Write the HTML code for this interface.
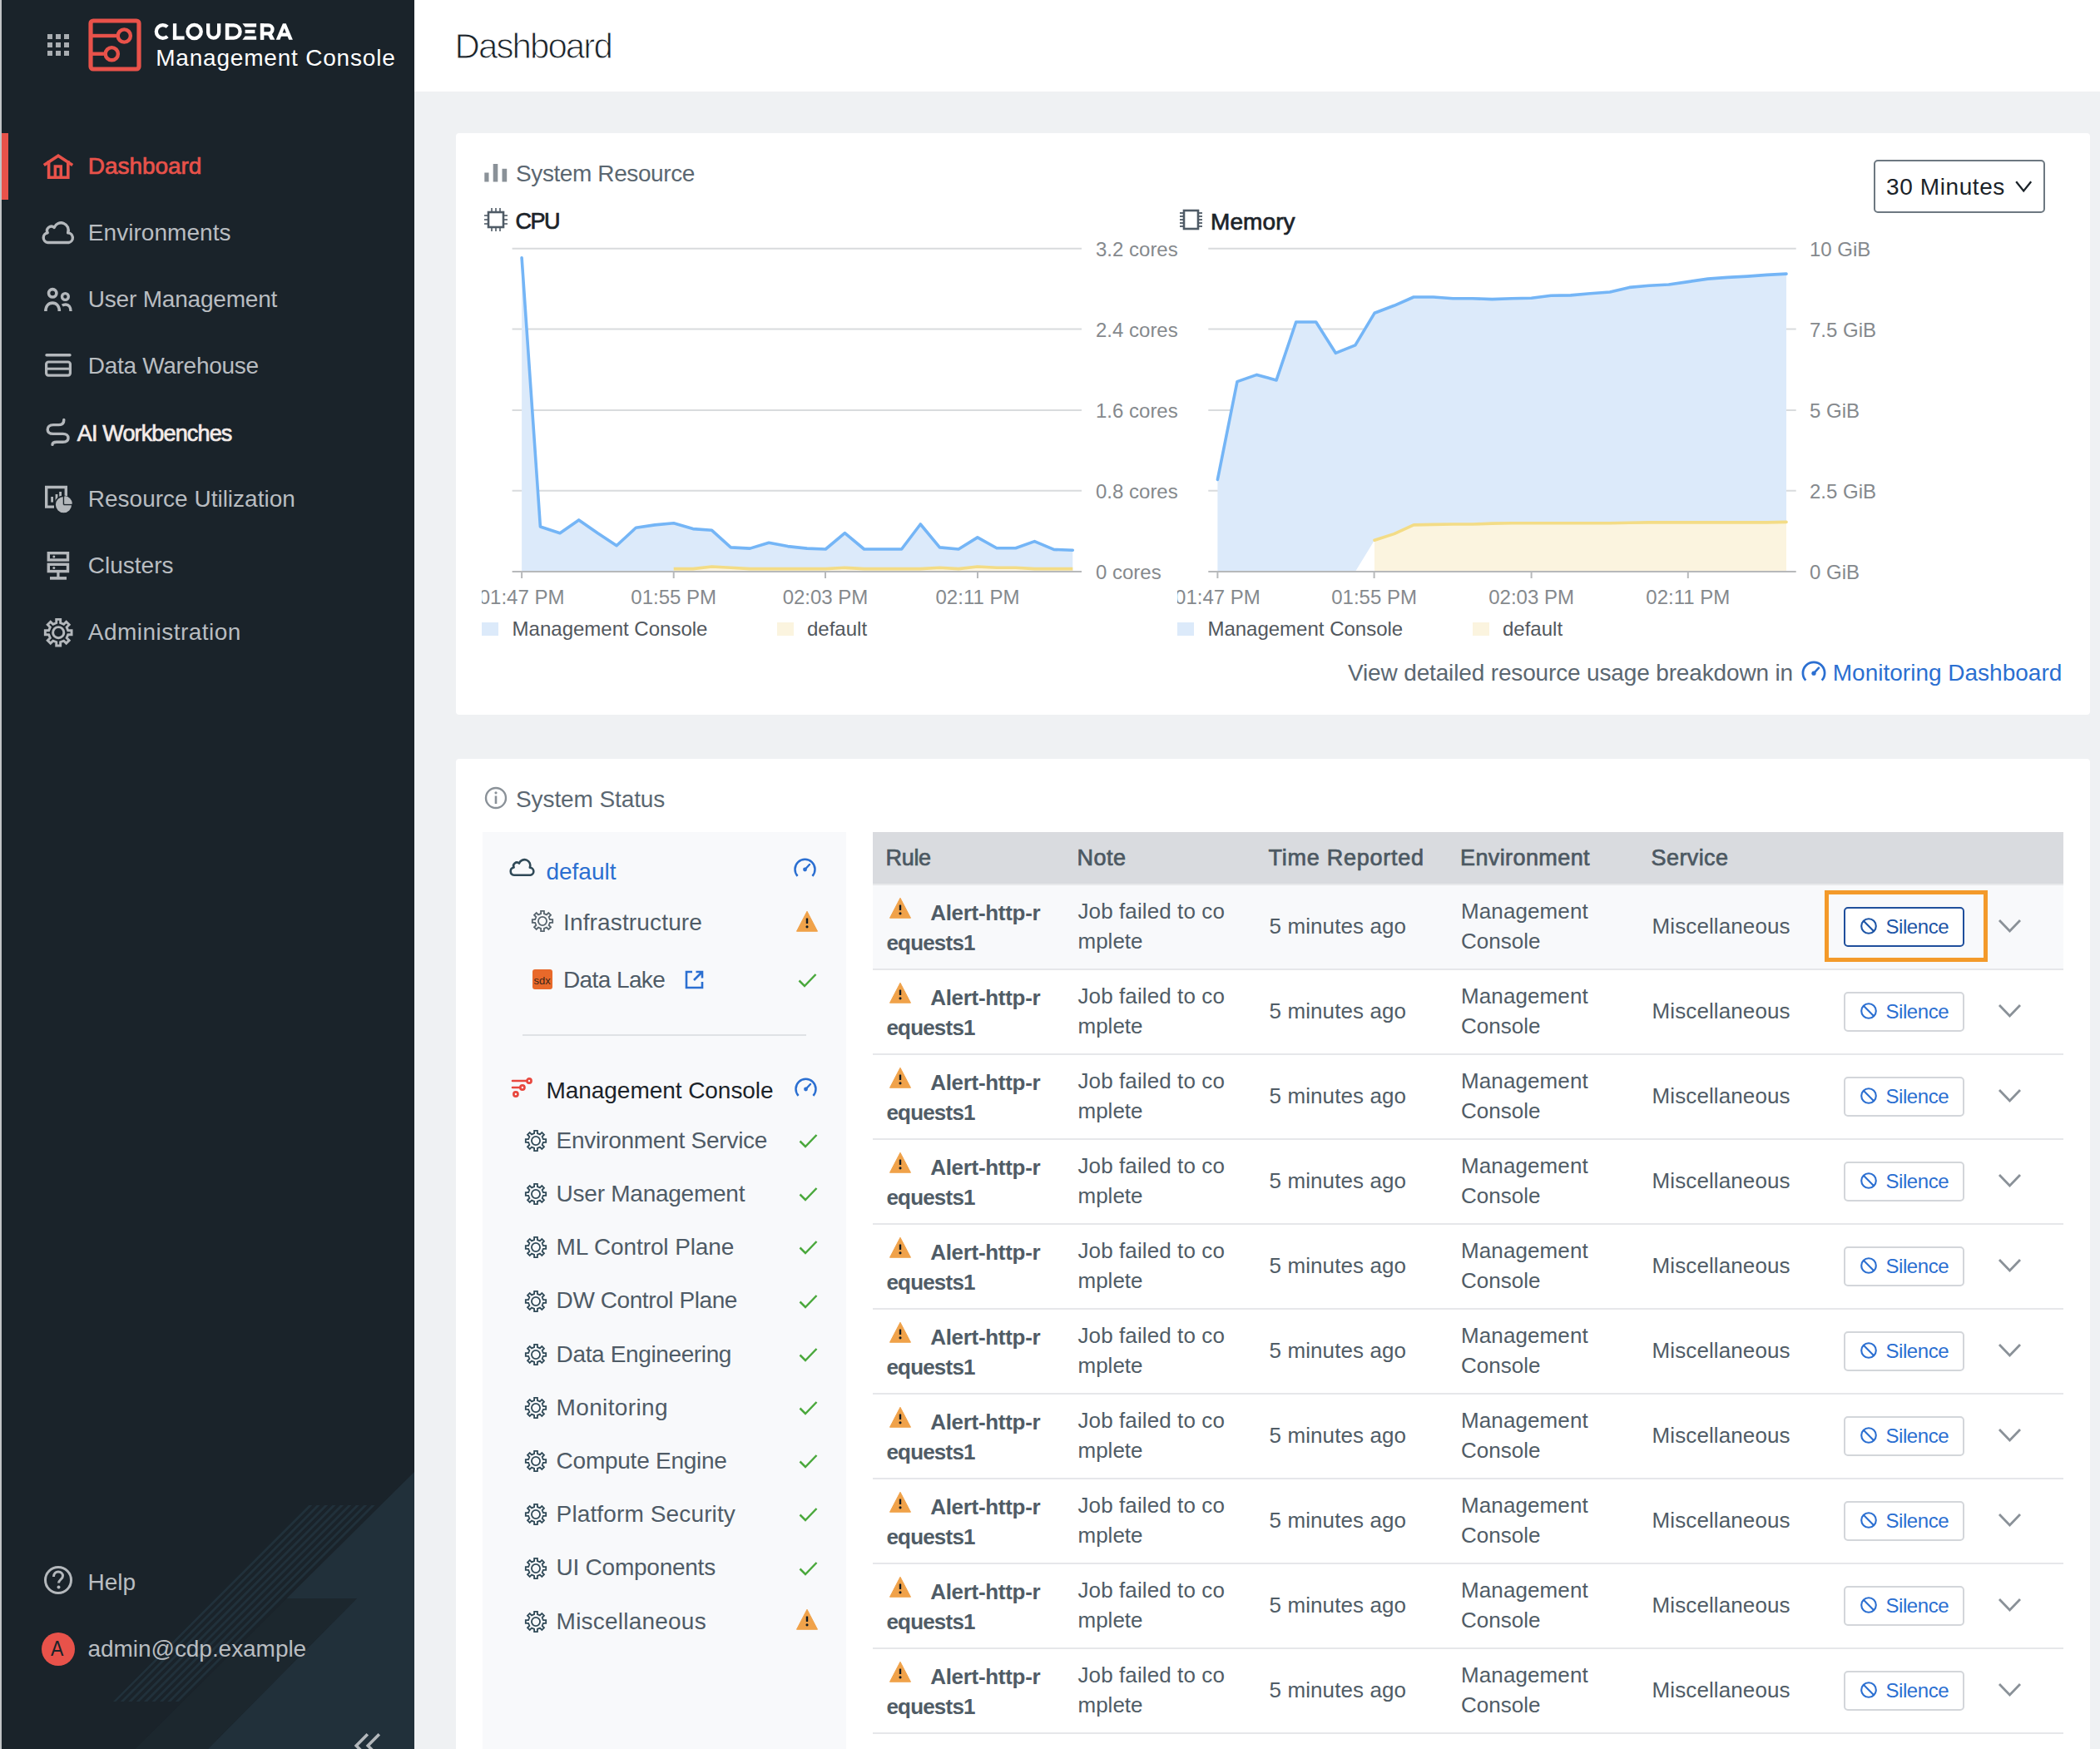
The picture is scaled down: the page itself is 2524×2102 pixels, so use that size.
<!DOCTYPE html>
<html><head><meta charset="utf-8"><style>
html,body{margin:0;padding:0;}
body{width:2524px;height:2102px;position:relative;overflow:hidden;background:#eff1f3;font-family:"Liberation Sans", sans-serif;}
.t{position:absolute;white-space:nowrap;}
svg{display:block;overflow:visible}
</style></head><body>
<div style="position:absolute;left:0;top:0;width:498px;height:2102px;background:#1a232a;overflow:hidden">
<svg width="498" height="2102" style="position:absolute;left:0;top:0">
<polygon points="344.5,1921 429,1921 250,2102 162.4,2102" fill="#1c272e"/>
<polygon points="498,1769 344.5,1921 429,1921 250,2102 498,2102" fill="#21303a"/>
<clipPath id="stc"><polygon points="370,1809 451,1809 219,2045 136,2045"/></clipPath>
<g clip-path="url(#stc)"><line x1="376.3" y1="1806" x2="131.3" y2="2051" stroke="#21313b" stroke-width="2.9"/><line x1="385.7" y1="1806" x2="140.7" y2="2051" stroke="#21313b" stroke-width="2.9"/><line x1="395.2" y1="1806" x2="150.2" y2="2051" stroke="#21313b" stroke-width="2.9"/><line x1="404.6" y1="1806" x2="159.6" y2="2051" stroke="#21313b" stroke-width="2.9"/><line x1="414.0" y1="1806" x2="169.0" y2="2051" stroke="#21313b" stroke-width="2.9"/><line x1="423.4" y1="1806" x2="178.4" y2="2051" stroke="#21313b" stroke-width="2.9"/><line x1="432.9" y1="1806" x2="187.9" y2="2051" stroke="#21313b" stroke-width="2.9"/><line x1="442.3" y1="1806" x2="197.3" y2="2051" stroke="#21313b" stroke-width="2.9"/><line x1="451.7" y1="1806" x2="206.7" y2="2051" stroke="#21313b" stroke-width="2.9"/></g>
</svg>
</div>
<div style="position:absolute;left:0.0px;top:0.0px;width:2.0px;height:2102.0px;background:#c2c4c6;"></div>
<div style="position:absolute;left:56.7px;top:40.7px;width:6.0px;height:6.0px;background:#a9adb1;"></div>
<div style="position:absolute;left:66.8px;top:40.7px;width:6.0px;height:6.0px;background:#a9adb1;"></div>
<div style="position:absolute;left:76.9px;top:40.7px;width:6.0px;height:6.0px;background:#a9adb1;"></div>
<div style="position:absolute;left:56.7px;top:50.8px;width:6.0px;height:6.0px;background:#a9adb1;"></div>
<div style="position:absolute;left:66.8px;top:50.8px;width:6.0px;height:6.0px;background:#a9adb1;"></div>
<div style="position:absolute;left:76.9px;top:50.8px;width:6.0px;height:6.0px;background:#a9adb1;"></div>
<div style="position:absolute;left:56.7px;top:60.9px;width:6.0px;height:6.0px;background:#a9adb1;"></div>
<div style="position:absolute;left:66.8px;top:60.9px;width:6.0px;height:6.0px;background:#a9adb1;"></div>
<div style="position:absolute;left:76.9px;top:60.9px;width:6.0px;height:6.0px;background:#a9adb1;"></div>
<svg style="position:absolute;left:104.0px;top:20.0px;" width="68.0" height="68.0" viewBox="0 0 68 68"><rect x="5" y="5" width="58" height="58" rx="3" fill="none" stroke="#e8524a" stroke-width="5.2"/>
<line x1="5" y1="23" x2="36" y2="23" stroke="#e8524a" stroke-width="4.4"/>
<circle cx="45.3" cy="23" r="7.6" fill="none" stroke="#e8524a" stroke-width="4.4"/>
<line x1="5" y1="44.7" x2="22" y2="44.7" stroke="#e8524a" stroke-width="4.4"/>
<circle cx="30.3" cy="44.7" r="7.6" fill="none" stroke="#e8524a" stroke-width="4.4"/></svg>
<svg style="position:absolute;left:0.0px;top:0.0px;" width="400.0" height="60.0" viewBox="0 0 400 60"><g fill="none" stroke="#fff" stroke-width="4.3">
<path d="M201.2 32.3 A7.9 7.9 0 1 0 201.2 43.7"/>
<circle cx="233.6" cy="37.95" r="8.15"/>
<path d="M250.15 28.2 V39.05 A6.5 6.5 0 0 0 263.15 39.05 V28.2"/>
<path d="M273.05 30.35 H281 A7.6 7.6 0 0 1 281 45.55 H273.05 Z"/>
<path d="M315.05 47.7 V30.35 H322.5 A5 5 0 0 1 322.5 40.35 H316"/>
</g>
<g fill="#fff">
<rect x="207.9" y="28.2" width="4.3" height="19.5"/><rect x="207.9" y="43.4" width="13.7" height="4.3"/>
<rect x="270.9" y="28.2" width="4.3" height="19.5"/>
<rect x="312.9" y="28.2" width="4.3" height="19.5"/>
<polygon points="291.4,28.2 308.1,28.2 308.1,32.5 294.6,32.5"/>
<polygon points="294.6,35.8 306.4,35.8 306.4,40.1 294.6,40.1"/>
<polygon points="294.6,43.4 308.1,43.4 308.1,47.7 291.4,47.7"/>
<polygon points="320.5,39 325.8,39 330.4,47.7 324.9,47.7"/>
<path fill-rule="evenodd" d="M331.7 47.7 L339.9 28.2 L343.7 28.2 L351.9 47.7 L347.2 47.7 L345.6 43.7 L338 43.7 L336.4 47.7 Z M339.6 39.6 L344 39.6 L341.8 34 Z"/>
</g></svg>
<div class="t" style="left:187.2px;top:55.7px;font-size:28px;line-height:28px;color:#ffffff;font-weight:400;letter-spacing:0.8px;">Management Console</div>
<div style="position:absolute;left:2.0px;top:160.0px;width:8.0px;height:80.0px;background:#e8524a;"></div>
<div class="t" style="left:105.8px;top:185.8px;font-size:28px;line-height:28px;color:#e8524a;font-weight:400;letter-spacing:-0.05px;-webkit-text-stroke:0.7px currentColor;">Dashboard</div>
<div class="t" style="left:105.8px;top:265.8px;font-size:28px;line-height:28px;color:#b9bdc1;font-weight:400;letter-spacing:0.05px;">Environments</div>
<div class="t" style="left:105.8px;top:345.8px;font-size:28px;line-height:28px;color:#b9bdc1;font-weight:400;letter-spacing:-0.2px;">User Management</div>
<div class="t" style="left:105.8px;top:425.8px;font-size:28px;line-height:28px;color:#b9bdc1;font-weight:400;letter-spacing:-0.3px;">Data Warehouse</div>
<div class="t" style="left:92.8px;top:507.6px;font-size:27px;line-height:27px;color:#f3ebe9;font-weight:400;letter-spacing:-0.85px;-webkit-text-stroke:0.7px currentColor;">AI Workbenches</div>
<div class="t" style="left:105.8px;top:585.8px;font-size:28px;line-height:28px;color:#b9bdc1;font-weight:400;letter-spacing:0.0px;">Resource Utilization</div>
<div class="t" style="left:105.8px;top:665.8px;font-size:28px;line-height:28px;color:#b9bdc1;font-weight:400;letter-spacing:0.0px;">Clusters</div>
<div class="t" style="left:105.8px;top:745.8px;font-size:28px;line-height:28px;color:#b9bdc1;font-weight:400;letter-spacing:0.47px;">Administration</div>
<svg style="position:absolute;left:0.0px;top:170.0px;" width="100.0" height="60.0" viewBox="0 170 100 60"><path d="M52.8 198.5 L70 187.2 L87.2 198.5" fill="none" stroke="#e8524a" stroke-width="3.6"/><path d="M58.6 193 V213.2 H81.8 V193" fill="none" stroke="#e8524a" stroke-width="3.6"/><path d="M66.35 213.2 V199.95 H73.25 V213.2" fill="none" stroke="#e8524a" stroke-width="3.5"/></svg>
<svg style="position:absolute;left:0.0px;top:255.0px;" width="100.0" height="50.0" viewBox="0 255 100 50"><path d="M57.5 291.5 A5.9 5.9 0 0 1 57.2 279.8 A5.2 5.2 0 0 1 65.2 273.4 A8.3 8.3 0 0 1 81.6 279.9 A5.85 5.85 0 0 1 82.6 291.5 Z" fill="none" stroke="#b4b8bc" stroke-width="3.4" stroke-linejoin="round"/></svg>
<svg style="position:absolute;left:0.0px;top:335.0px;" width="100.0" height="50.0" viewBox="0 335 100 50"><circle cx="63.2" cy="352.3" r="4.7" fill="none" stroke="#b4b8bc" stroke-width="3.6"/><path d="M54.9 374 C54.9 367.5 58.5 364.1 63.1 364.1 C67.7 364.1 71.3 367.5 71.3 374" fill="none" stroke="#b4b8bc" stroke-width="3.6"/><circle cx="78.4" cy="356.5" r="3.9" fill="none" stroke="#b4b8bc" stroke-width="3.4"/><path d="M74.8 367.2 C76 366.3 77.5 366 79 366 C82.5 366 85 368.8 85 374" fill="none" stroke="#b4b8bc" stroke-width="3.4"/></svg>
<svg style="position:absolute;left:0.0px;top:415.0px;" width="100.0" height="45.0" viewBox="0 415 100 45"><line x1="56" y1="426.8" x2="84" y2="426.8" stroke="#b4b8bc" stroke-width="3.4" stroke-linecap="round"/><rect x="55.6" y="435" width="28.8" height="16.1" rx="2.6" fill="none" stroke="#b4b8bc" stroke-width="3.2"/><line x1="55.6" y1="443.2" x2="84.4" y2="443.2" stroke="#b4b8bc" stroke-width="3"/></svg>
<svg style="position:absolute;left:0.0px;top:495.0px;" width="100.0" height="50.0" viewBox="0 495 100 50"><path d="M76.8 504.4 C76.8 508.6 74.5 510.6 70.5 510.6 L64 510.6 C59.5 510.6 57.2 513 57.2 516.2 C57.2 519.4 59.5 521.4 64 521.4 L75.5 521.4 C79.8 521.4 82 523.6 82 526.4 C82 529.2 79.8 531.2 75.5 531.2 L68 531.2 C64.5 531.2 63 532.6 63 534.4" fill="none" stroke="#b4b8bc" stroke-width="3.4" stroke-linecap="round" stroke-linejoin="round"/></svg>
<svg style="position:absolute;left:0.0px;top:575.0px;" width="100.0" height="50.0" viewBox="0 575 100 50"><path d="M65 609.1 H55.7 V585.5 H79.3 V597" fill="none" stroke="#b4b8bc" stroke-width="3.4"/><rect x="61.2" y="597" width="2.8" height="6.6" fill="#b4b8bc"/><rect x="66.6" y="594" width="2.8" height="9.6" fill="#b4b8bc"/><rect x="71.2" y="591" width="2.8" height="8" fill="#b4b8bc"/><circle cx="76.5" cy="606.6" r="10.4" fill="#b4b8bc" stroke="#1a232a" stroke-width="1.6"/><path d="M76.5 606.6 V596.5 M76.5 606.6 H86.5" stroke="#1a232a" stroke-width="1.5"/><path d="M77.5 596 A10 10 0 0 1 87 605.6 H77.5 Z" fill="#b4b8bc"/></svg>
<svg style="position:absolute;left:0.0px;top:655.0px;" width="100.0" height="50.0" viewBox="0 655 100 50"><rect x="58.3" y="664.7" width="23.2" height="8.3" fill="none" stroke="#b4b8bc" stroke-width="3.4"/><rect x="58.3" y="678.3" width="23.2" height="8.3" fill="none" stroke="#b4b8bc" stroke-width="3.4"/><circle cx="64.8" cy="669" r="1.5" fill="#b4b8bc"/><circle cx="64.8" cy="682.6" r="1.5" fill="#b4b8bc"/><line x1="69.9" y1="688" x2="69.9" y2="694" stroke="#b4b8bc" stroke-width="3.2"/><line x1="60" y1="694.9" x2="80" y2="694.9" stroke="#b4b8bc" stroke-width="3.6"/></svg>
<svg style="position:absolute;left:51.8px;top:741.8px;" width="36.4" height="36.4" viewBox="0 0 28 28"><path d="M12.10,5.10 L12.10,1.80 L15.90,1.80 L15.90,5.10 L18.95,6.36 L21.28,4.03 L23.97,6.72 L21.64,9.05 L22.90,12.10 L26.20,12.10 L26.20,15.90 L22.90,15.90 L21.64,18.95 L23.97,21.28 L21.28,23.97 L18.95,21.64 L15.90,22.90 L15.90,26.20 L12.10,26.20 L12.10,22.90 L9.05,21.64 L6.72,23.97 L4.03,21.28 L6.36,18.95 L5.10,15.90 L1.80,15.90 L1.80,12.10 L5.10,12.10 L6.36,9.05 L4.03,6.72 L6.72,4.03 L9.05,6.36Z" fill="none" stroke="#b4b8bc" stroke-width="2.25" stroke-linejoin="miter"/><circle cx="14" cy="14" r="5.05" fill="none" stroke="#b4b8bc" stroke-width="2.25"/></svg>
<svg style="position:absolute;left:51.0px;top:1880.0px;" width="38.0" height="38.0" viewBox="0 0 38 38"><circle cx="19" cy="19" r="15.5" fill="none" stroke="#b4b8bc" stroke-width="3"/><path d="M13.5 15 C13.5 11 16 9 19 9 C22.5 9 24.5 11.5 24.5 14 C24.5 18 19.5 18.5 19.5 22.5" fill="none" stroke="#b4b8bc" stroke-width="3"/><circle cx="19.5" cy="27.5" r="2" fill="#b4b8bc"/></svg>
<div class="t" style="left:105.5px;top:1887.8px;font-size:28px;line-height:28px;color:#b9bdc1;font-weight:400;letter-spacing:0px;">Help</div>
<div style="position:absolute;left:50px;top:1962px;width:40px;height:40px;border-radius:50%;background:#e8524a"></div>
<div class="t" style="left:61.3px;top:1968.8px;font-size:25px;line-height:25px;color:#1b2329;font-weight:400;letter-spacing:0px;transform:scaleX(0.92);transform-origin:left">A</div>
<div class="t" style="left:105.5px;top:1967.8px;font-size:28px;line-height:28px;color:#b9bdc1;font-weight:400;letter-spacing:-0.05px;">admin@cdp.example</div>
<svg style="position:absolute;left:400.0px;top:2060.0px;overflow:hidden" width="98.0" height="42.0" viewBox="400 2060 98 42"><path d="M441.8 2084.2 L428.2 2098 L441.8 2111.8 M455.8 2084.2 L442.2 2098 L455.8 2111.8" fill="none" stroke="#b4b8bc" stroke-width="3.6"/></svg>
<div style="position:absolute;left:498.0px;top:0.0px;width:2026.0px;height:110.0px;background:#ffffff;"></div>
<div class="t" style="left:546.5px;top:34.9px;font-size:42px;line-height:42px;color:#1b2329;font-weight:400;letter-spacing:-1.9px;-webkit-text-stroke:1px #fff;">Dashboard</div>
<div style="position:absolute;left:548.0px;top:160.0px;width:1964.0px;height:699.0px;background:#ffffff;border-radius:4px;"></div>
<svg style="position:absolute;left:582.0px;top:196.0px;" width="28.0" height="23.0" viewBox="0 0 28 23"><rect x="0.3" y="11.5" width="5.2" height="11" fill="#8a9198"/><rect x="10.7" y="1" width="5.6" height="21.5" fill="#8a9198"/><rect x="21.5" y="6.8" width="5.7" height="15.7" fill="#8a9198"/></svg>
<div class="t" style="left:620.0px;top:194.8px;font-size:28px;line-height:28px;color:#5b6771;font-weight:400;letter-spacing:-0.4px;">System Resource</div>
<svg style="position:absolute;left:582.0px;top:250.0px;" width="28.0" height="28.0" viewBox="0 0 28 28"><rect x="5" y="5" width="18" height="18" fill="none" stroke="#4f5b66" stroke-width="2.6"/><line x1="9" y1="0" x2="9" y2="5" stroke="#4f5b66" stroke-width="1.6"/><line x1="9" y1="23" x2="9" y2="28" stroke="#4f5b66" stroke-width="1.6"/><line x1="0" y1="9" x2="5" y2="9" stroke="#4f5b66" stroke-width="1.6"/><line x1="23" y1="9" x2="28" y2="9" stroke="#4f5b66" stroke-width="1.6"/><line x1="14" y1="0" x2="14" y2="5" stroke="#4f5b66" stroke-width="1.6"/><line x1="14" y1="23" x2="14" y2="28" stroke="#4f5b66" stroke-width="1.6"/><line x1="0" y1="14" x2="5" y2="14" stroke="#4f5b66" stroke-width="1.6"/><line x1="23" y1="14" x2="28" y2="14" stroke="#4f5b66" stroke-width="1.6"/><line x1="19" y1="0" x2="19" y2="5" stroke="#4f5b66" stroke-width="1.6"/><line x1="19" y1="23" x2="19" y2="28" stroke="#4f5b66" stroke-width="1.6"/><line x1="0" y1="19" x2="5" y2="19" stroke="#4f5b66" stroke-width="1.6"/><line x1="23" y1="19" x2="28" y2="19" stroke="#4f5b66" stroke-width="1.6"/></svg>
<div class="t" style="left:619.5px;top:252.6px;font-size:27px;line-height:27px;color:#1b2329;font-weight:400;letter-spacing:-1.5px;-webkit-text-stroke:0.7px currentColor;">CPU</div>
<svg style="position:absolute;left:1418.0px;top:250.0px;" width="28.0" height="28.0" viewBox="0 0 28 28"><rect x="5" y="3" width="17" height="22" fill="none" stroke="#4f5b66" stroke-width="2.6"/><line x1="0" y1="6" x2="5" y2="6" stroke="#4f5b66" stroke-width="1.8"/><line x1="22" y1="6" x2="27" y2="6" stroke="#4f5b66" stroke-width="1.8"/><line x1="0" y1="10" x2="5" y2="10" stroke="#4f5b66" stroke-width="1.8"/><line x1="22" y1="10" x2="27" y2="10" stroke="#4f5b66" stroke-width="1.8"/><line x1="0" y1="14" x2="5" y2="14" stroke="#4f5b66" stroke-width="1.8"/><line x1="22" y1="14" x2="27" y2="14" stroke="#4f5b66" stroke-width="1.8"/><line x1="0" y1="18" x2="5" y2="18" stroke="#4f5b66" stroke-width="1.8"/><line x1="22" y1="18" x2="27" y2="18" stroke="#4f5b66" stroke-width="1.8"/><line x1="0" y1="22" x2="5" y2="22" stroke="#4f5b66" stroke-width="1.8"/><line x1="22" y1="22" x2="27" y2="22" stroke="#4f5b66" stroke-width="1.8"/></svg>
<div class="t" style="left:1455.0px;top:253.2px;font-size:28px;line-height:28px;color:#1b2329;font-weight:400;letter-spacing:0.1px;-webkit-text-stroke:0.7px currentColor;">Memory</div>
<div style="position:absolute;left:2251.6px;top:192.4px;width:202.2px;height:59.2px;border:2px solid #6d7881;border-radius:5px"></div>
<div class="t" style="left:2267.0px;top:211.3px;font-size:28px;line-height:28px;color:#1b2329;font-weight:400;letter-spacing:0.6px;">30 Minutes</div>
<svg style="position:absolute;left:2400.0px;top:200.0px;" width="60.0" height="40.0" viewBox="2400 200 60 40"><path d="M2423.2 218.2 L2432.2 229.4 L2441.2 218.2" fill="none" stroke="#1b2329" stroke-width="2.3"/></svg>
<svg style="position:absolute;left:0;top:0" width="2524" height="900"><line x1="615.6" y1="298.7" x2="1300" y2="298.7" stroke="#d9dbdd" stroke-width="2"/><line x1="1452.3" y1="298.7" x2="2158.7" y2="298.7" stroke="#d9dbdd" stroke-width="2"/><line x1="615.6" y1="395.6" x2="1300" y2="395.6" stroke="#d9dbdd" stroke-width="2"/><line x1="1452.3" y1="395.6" x2="2158.7" y2="395.6" stroke="#d9dbdd" stroke-width="2"/><line x1="615.6" y1="492.9" x2="1300" y2="492.9" stroke="#d9dbdd" stroke-width="2"/><line x1="1452.3" y1="492.9" x2="2158.7" y2="492.9" stroke="#d9dbdd" stroke-width="2"/><line x1="615.6" y1="589.8" x2="1300" y2="589.8" stroke="#d9dbdd" stroke-width="2"/><line x1="1452.3" y1="589.8" x2="2158.7" y2="589.8" stroke="#d9dbdd" stroke-width="2"/><polygon points="627.1,309.9 649.4,633.0 673.0,640.7 695.7,624.9 718.4,640.7 741.1,655.7 764.3,634.3 787.0,630.9 809.7,628.7 832.9,635.6 855.6,637.3 878.3,657.9 901.4,659.1 924.1,652.3 946.9,656.6 970.0,659.1 992.3,660.0 1015.4,640.7 1038.6,660.0 1060.9,660.0 1083.6,660.0 1106.3,630.0 1129.4,657.9 1152.1,660.0 1174.9,645.9 1198.0,658.7 1220.7,658.7 1243.4,650.6 1266.6,660.4 1289.3,661.3 1289.3,687 627.1,687" fill="#dceafa"/><polygon points="809.7,683.6 832.9,683.6 855.6,681.0 878.3,682.3 901.4,683.6 924.1,683.6 946.9,683.6 970.0,683.6 992.3,683.6 1015.4,682.3 1038.6,683.6 1060.9,683.6 1083.6,683.6 1106.3,683.6 1129.4,682.3 1152.1,683.6 1174.9,681.0 1198.0,682.3 1220.7,682.3 1243.4,683.6 1266.6,683.6 1289.3,683.6 1289.3,687 809.7,687" fill="#fbf4df"/><polyline points="809.7,683.6 832.9,683.6 855.6,681.0 878.3,682.3 901.4,683.6 924.1,683.6 946.9,683.6 970.0,683.6 992.3,683.6 1015.4,682.3 1038.6,683.6 1060.9,683.6 1083.6,683.6 1106.3,683.6 1129.4,682.3 1152.1,683.6 1174.9,681.0 1198.0,682.3 1220.7,682.3 1243.4,683.6 1266.6,683.6 1289.3,683.6" fill="none" stroke="#f3dc86" stroke-width="3.6" stroke-linejoin="round"/><polyline points="627.1,309.9 649.4,633.0 673.0,640.7 695.7,624.9 718.4,640.7 741.1,655.7 764.3,634.3 787.0,630.9 809.7,628.7 832.9,635.6 855.6,637.3 878.3,657.9 901.4,659.1 924.1,652.3 946.9,656.6 970.0,659.1 992.3,660.0 1015.4,640.7 1038.6,660.0 1060.9,660.0 1083.6,660.0 1106.3,630.0 1129.4,657.9 1152.1,660.0 1174.9,645.9 1198.0,658.7 1220.7,658.7 1243.4,650.6 1266.6,660.4 1289.3,661.3" fill="none" stroke="#74b5f6" stroke-width="3.6" stroke-linejoin="round" stroke-linecap="round"/><polygon points="1463.4,576.4 1487.0,458.6 1510.6,450.4 1534.1,456.9 1557.7,387.0 1581.7,387.0 1605.3,424.3 1628.9,414.9 1652.0,376.3 1675.6,367.3 1699.1,357.0 1722.7,357.0 1746.3,358.7 1769.9,358.7 1793.4,359.6 1817.0,358.7 1840.6,358.3 1864.1,355.3 1887.7,354.9 1911.3,352.7 1934.9,351.0 1958.4,345.4 1982.0,343.3 2005.6,342.0 2029.1,338.6 2052.7,335.1 2076.3,333.4 2099.9,332.1 2123.4,330.4 2147.0,329.1 2147.0,687 2147.0,627.4 2147.0,627.4 2123.4,627.9 2099.9,627.9 2076.3,627.9 2052.7,627.9 2029.1,627.9 2005.6,627.9 1982.0,627.9 1958.4,628.3 1934.9,628.7 1911.3,628.7 1887.7,628.7 1864.1,628.7 1840.6,628.7 1817.0,628.7 1793.4,629.1 1769.9,630.0 1746.3,630.0 1722.7,630.4 1699.1,630.9 1675.6,641.6 1652.0,649.3 1628.9,687 1463.4,687" fill="#dceafa"/><polygon points="1652.0,649.3 1675.6,641.6 1699.1,630.9 1722.7,630.4 1746.3,630.0 1769.9,630.0 1793.4,629.1 1817.0,628.7 1840.6,628.7 1864.1,628.7 1887.7,628.7 1911.3,628.7 1934.9,628.7 1958.4,628.3 1982.0,627.9 2005.6,627.9 2029.1,627.9 2052.7,627.9 2076.3,627.9 2099.9,627.9 2123.4,627.9 2147.0,627.4 2147.0,687 1652.0,687" fill="#fbf4df"/><polyline points="1652.0,649.3 1675.6,641.6 1699.1,630.9 1722.7,630.4 1746.3,630.0 1769.9,630.0 1793.4,629.1 1817.0,628.7 1840.6,628.7 1864.1,628.7 1887.7,628.7 1911.3,628.7 1934.9,628.7 1958.4,628.3 1982.0,627.9 2005.6,627.9 2029.1,627.9 2052.7,627.9 2076.3,627.9 2099.9,627.9 2123.4,627.9 2147.0,627.4" fill="none" stroke="#f3dc86" stroke-width="3.6" stroke-linejoin="round" stroke-linecap="round"/><polyline points="1463.4,576.4 1487.0,458.6 1510.6,450.4 1534.1,456.9 1557.7,387.0 1581.7,387.0 1605.3,424.3 1628.9,414.9 1652.0,376.3 1675.6,367.3 1699.1,357.0 1722.7,357.0 1746.3,358.7 1769.9,358.7 1793.4,359.6 1817.0,358.7 1840.6,358.3 1864.1,355.3 1887.7,354.9 1911.3,352.7 1934.9,351.0 1958.4,345.4 1982.0,343.3 2005.6,342.0 2029.1,338.6 2052.7,335.1 2076.3,333.4 2099.9,332.1 2123.4,330.4 2147.0,329.1" fill="none" stroke="#74b5f6" stroke-width="3.6" stroke-linejoin="round" stroke-linecap="round"/><line x1="615.6" y1="687" x2="1300" y2="687" stroke="#b7b9bb" stroke-width="2"/><line x1="1452.3" y1="687" x2="2158.7" y2="687" stroke="#b7b9bb" stroke-width="2"/><line x1="627.1" y1="687" x2="627.1" y2="695" stroke="#b7b9bb" stroke-width="2"/><line x1="809.7" y1="687" x2="809.7" y2="695" stroke="#b7b9bb" stroke-width="2"/><line x1="992" y1="687" x2="992" y2="695" stroke="#b7b9bb" stroke-width="2"/><line x1="1175" y1="687" x2="1175" y2="695" stroke="#b7b9bb" stroke-width="2"/><line x1="1463.4" y1="687" x2="1463.4" y2="695" stroke="#b7b9bb" stroke-width="2"/><line x1="1651.6" y1="687" x2="1651.6" y2="695" stroke="#b7b9bb" stroke-width="2"/><line x1="1840.6" y1="687" x2="1840.6" y2="695" stroke="#b7b9bb" stroke-width="2"/><line x1="2028.8" y1="687" x2="2028.8" y2="695" stroke="#b7b9bb" stroke-width="2"/></svg>
<div class="t" style="left:1317.0px;top:287.5px;font-size:24px;line-height:24px;color:#85898d;font-weight:400;letter-spacing:0px;">3.2 cores</div>
<div class="t" style="left:1317.0px;top:384.6px;font-size:24px;line-height:24px;color:#85898d;font-weight:400;letter-spacing:0px;">2.4 cores</div>
<div class="t" style="left:1317.0px;top:481.7px;font-size:24px;line-height:24px;color:#85898d;font-weight:400;letter-spacing:0px;">1.6 cores</div>
<div class="t" style="left:1317.0px;top:578.8px;font-size:24px;line-height:24px;color:#85898d;font-weight:400;letter-spacing:0px;">0.8 cores</div>
<div class="t" style="left:1317.0px;top:675.9px;font-size:24px;line-height:24px;color:#85898d;font-weight:400;letter-spacing:0px;">0 cores</div>
<div class="t" style="left:2175.0px;top:287.5px;font-size:24px;line-height:24px;color:#85898d;font-weight:400;letter-spacing:0px;">10 GiB</div>
<div class="t" style="left:2175.0px;top:384.6px;font-size:24px;line-height:24px;color:#85898d;font-weight:400;letter-spacing:0px;">7.5 GiB</div>
<div class="t" style="left:2175.0px;top:481.7px;font-size:24px;line-height:24px;color:#85898d;font-weight:400;letter-spacing:0px;">5 GiB</div>
<div class="t" style="left:2175.0px;top:578.8px;font-size:24px;line-height:24px;color:#85898d;font-weight:400;letter-spacing:0px;">2.5 GiB</div>
<div class="t" style="left:2175.0px;top:675.9px;font-size:24px;line-height:24px;color:#85898d;font-weight:400;letter-spacing:0px;">0 GiB</div>
<div style="position:absolute;left:579px;top:690px;width:725px;height:50px;overflow:hidden"><div class="t" style="left:-51.9px;top:15.7px;width:200px;text-align:center;font-size:24px;line-height:24px;color:#85898d">01:47 PM</div><div class="t" style="left:130.7px;top:15.7px;width:200px;text-align:center;font-size:24px;line-height:24px;color:#85898d">01:55 PM</div><div class="t" style="left:313.0px;top:15.7px;width:200px;text-align:center;font-size:24px;line-height:24px;color:#85898d">02:03 PM</div><div class="t" style="left:496.0px;top:15.7px;width:200px;text-align:center;font-size:24px;line-height:24px;color:#85898d">02:11 PM</div></div>
<div style="position:absolute;left:1415px;top:690px;width:725px;height:50px;overflow:hidden"><div class="t" style="left:-51.6px;top:15.7px;width:200px;text-align:center;font-size:24px;line-height:24px;color:#85898d">01:47 PM</div><div class="t" style="left:136.6px;top:15.7px;width:200px;text-align:center;font-size:24px;line-height:24px;color:#85898d">01:55 PM</div><div class="t" style="left:325.6px;top:15.7px;width:200px;text-align:center;font-size:24px;line-height:24px;color:#85898d">02:03 PM</div><div class="t" style="left:513.8px;top:15.7px;width:200px;text-align:center;font-size:24px;line-height:24px;color:#85898d">02:11 PM</div></div>
<div style="position:absolute;left:579.0px;top:748.0px;width:19.5px;height:15.5px;background:#dceafa;"></div>
<div class="t" style="left:615.6px;top:744.0px;font-size:24px;line-height:24px;color:#52575d;font-weight:400;letter-spacing:0px;">Management Console</div>
<div style="position:absolute;left:933.6px;top:748.0px;width:20.0px;height:15.5px;background:#fbf4df;"></div>
<div class="t" style="left:970.0px;top:744.0px;font-size:24px;line-height:24px;color:#52575d;font-weight:400;letter-spacing:0px;">default</div>
<div style="position:absolute;left:1415.0px;top:748.0px;width:19.5px;height:15.5px;background:#dceafa;"></div>
<div class="t" style="left:1451.4px;top:744.0px;font-size:24px;line-height:24px;color:#52575d;font-weight:400;letter-spacing:0px;">Management Console</div>
<div style="position:absolute;left:1769.5px;top:748.0px;width:20.0px;height:15.5px;background:#fbf4df;"></div>
<div class="t" style="left:1806.0px;top:744.0px;font-size:24px;line-height:24px;color:#52575d;font-weight:400;letter-spacing:0px;">default</div>
<div class="t" style="left:1620.0px;top:794.8px;font-size:28px;line-height:28px;color:#5b6771;font-weight:400;letter-spacing:-0.15px;">View detailed resource usage breakdown in</div>
<svg style="position:absolute;left:2165.0px;top:795.0px;" width="30.0" height="24.0" viewBox="0 0 27 22"><path d="M4.6 20.8 A12 12 0 1 1 22.4 20.8" fill="none" stroke="#2b6fd1" stroke-width="2.5" stroke-linecap="butt"/><path d="M13.5 13 L19 7" stroke="#2b6fd1" stroke-width="2.4" stroke-linecap="round"/><circle cx="13.5" cy="13" r="2.4" fill="#2b6fd1"/></svg>
<div class="t" style="left:2202.8px;top:794.8px;font-size:28px;line-height:28px;color:#2b6fd1;font-weight:400;letter-spacing:0px;">Monitoring Dashboard</div>
<div style="position:absolute;left:548.0px;top:912.0px;width:1964.0px;height:1300.0px;background:#ffffff;border-radius:4px;"></div>
<svg style="position:absolute;left:582.0px;top:945.0px;" width="28.0" height="28.0" viewBox="0 0 28 28"><circle cx="14" cy="14" r="12" fill="none" stroke="#8a9198" stroke-width="2.4"/><rect x="12.7" y="11.5" width="2.6" height="9.5" fill="#8a9198"/><circle cx="14" cy="7.8" r="1.6" fill="#8a9198"/></svg>
<div class="t" style="left:620.0px;top:947.4px;font-size:28px;line-height:28px;color:#5b6771;font-weight:400;letter-spacing:-0.1px;">System Status</div>
<div style="position:absolute;left:580.0px;top:1000.0px;width:437.0px;height:1200.0px;background:#f8f9fb;"></div>
<svg style="position:absolute;left:612.3px;top:1032.3px;" width="31.4" height="21.1" viewBox="50 266.4 40 26.8"><path d="M57.5 291.5 A5.9 5.9 0 0 1 57.2 279.8 A5.2 5.2 0 0 1 65.2 273.4 A8.3 8.3 0 0 1 81.6 279.9 A5.85 5.85 0 0 1 82.6 291.5 Z" fill="none" stroke="#2f4957" stroke-width="3.3" stroke-linejoin="round"/></svg>
<div class="t" style="left:656.4px;top:1034.1px;font-size:28px;line-height:28px;color:#2b6fd1;font-weight:400;letter-spacing:0px;">default</div>
<svg style="position:absolute;left:954.0px;top:1032.0px;" width="27.0" height="22.0" viewBox="0 0 27 22"><path d="M4.6 20.8 A12 12 0 1 1 22.4 20.8" fill="none" stroke="#2b6fd1" stroke-width="2.5" stroke-linecap="butt"/><path d="M13.5 13 L19 7" stroke="#2b6fd1" stroke-width="2.4" stroke-linecap="round"/><circle cx="13.5" cy="13" r="2.4" fill="#2b6fd1"/></svg>
<svg style="position:absolute;left:637.8px;top:1092.9px;" width="28.0" height="28.0" viewBox="0 0 28 28"><path d="M12.10,5.10 L12.10,1.80 L15.90,1.80 L15.90,5.10 L18.95,6.36 L21.28,4.03 L23.97,6.72 L21.64,9.05 L22.90,12.10 L26.20,12.10 L26.20,15.90 L22.90,15.90 L21.64,18.95 L23.97,21.28 L21.28,23.97 L18.95,21.64 L15.90,22.90 L15.90,26.20 L12.10,26.20 L12.10,22.90 L9.05,21.64 L6.72,23.97 L4.03,21.28 L6.36,18.95 L5.10,15.90 L1.80,15.90 L1.80,12.10 L5.10,12.10 L6.36,9.05 L4.03,6.72 L6.72,4.03 L9.05,6.36Z" fill="none" stroke="#56636d" stroke-width="1.8" stroke-linejoin="miter"/><circle cx="14" cy="14" r="5.05" fill="none" stroke="#56636d" stroke-width="1.8"/></svg>
<div class="t" style="left:677.0px;top:1094.8px;font-size:28px;line-height:28px;color:#4f5b66;font-weight:400;letter-spacing:0.15px;">Infrastructure</div>
<svg style="position:absolute;left:957.0px;top:1094.0px;" width="26.0" height="26.5" viewBox="0 0 26 26"><path d="M13 1 L25.5 25 L0.5 25 Z" fill="#f0a24a" stroke="#f0a24a" stroke-width="1" stroke-linejoin="round"/><rect x="11.8" y="9.2" width="2.4" height="6.6" rx="0.6" fill="#111a22"/><circle cx="13" cy="19.6" r="1.55" fill="#111a22"/></svg>
<div style="position:absolute;left:640px;top:1165px;width:24px;height:24px;border-radius:3px;background:#e8692a"></div>
<div class="t" style="left:641.5px;top:1171.5px;font-size:13px;line-height:13px;color:#3b2418;font-weight:400;letter-spacing:0px;">sdx</div>
<div class="t" style="left:677.0px;top:1164.1px;font-size:28px;line-height:28px;color:#4f5b66;font-weight:400;letter-spacing:-0.6px;">Data Lake</div>
<svg style="position:absolute;left:823.0px;top:1166.0px;" width="23.0" height="23.0" viewBox="0 0 23 23"><path d="M9 2 H2 V21 H21 V14" fill="none" stroke="#2b6fd1" stroke-width="2.6"/><path d="M11 12 L20.5 2.5 M13.5 2 H21 V9.5" fill="none" stroke="#2b6fd1" stroke-width="2.6"/></svg>
<svg style="position:absolute;left:959.0px;top:1168.5px;" width="23.0" height="18.0" viewBox="0 0 23 18"><path d="M1.5 9.5 L8 16 L21.5 2" fill="none" stroke="#4aa83c" stroke-width="2.5"/></svg>
<div style="position:absolute;left:628.0px;top:1243.0px;width:341.0px;height:2.0px;background:#dfe2e5;"></div>
<svg style="position:absolute;left:614.0px;top:1294.0px;" width="27.0" height="27.0" viewBox="0 0 27 27"><line x1="2" y1="5" x2="20" y2="5" stroke="#e8483f" stroke-width="2.6" stroke-linecap="round"/><circle cx="22" cy="5" r="2.55" fill="#f8f9fb" stroke="#e8483f" stroke-width="2.7"/><line x1="2" y1="13" x2="12" y2="13" stroke="#e8483f" stroke-width="2.6" stroke-linecap="round"/><circle cx="13.9" cy="13" r="2.55" fill="#f8f9fb" stroke="#e8483f" stroke-width="2.7"/><circle cx="5.9" cy="21" r="2.55" fill="none" stroke="#e8483f" stroke-width="2.7"/></svg>
<div class="t" style="left:656.5px;top:1296.8px;font-size:28px;line-height:28px;color:#1b2329;font-weight:400;letter-spacing:-0.05px;">Management Console</div>
<svg style="position:absolute;left:954.5px;top:1296.0px;" width="27.0" height="22.0" viewBox="0 0 27 22"><path d="M4.6 20.8 A12 12 0 1 1 22.4 20.8" fill="none" stroke="#2b6fd1" stroke-width="2.5" stroke-linecap="butt"/><path d="M13.5 13 L19 7" stroke="#2b6fd1" stroke-width="2.4" stroke-linecap="round"/><circle cx="13.5" cy="13" r="2.4" fill="#2b6fd1"/></svg>
<svg style="position:absolute;left:630.0px;top:1356.9px;" width="28.0" height="28.0" viewBox="0 0 28 28"><path d="M12.10,5.10 L12.10,1.80 L15.90,1.80 L15.90,5.10 L18.95,6.36 L21.28,4.03 L23.97,6.72 L21.64,9.05 L22.90,12.10 L26.20,12.10 L26.20,15.90 L22.90,15.90 L21.64,18.95 L23.97,21.28 L21.28,23.97 L18.95,21.64 L15.90,22.90 L15.90,26.20 L12.10,26.20 L12.10,22.90 L9.05,21.64 L6.72,23.97 L4.03,21.28 L6.36,18.95 L5.10,15.90 L1.80,15.90 L1.80,12.10 L5.10,12.10 L6.36,9.05 L4.03,6.72 L6.72,4.03 L9.05,6.36Z" fill="none" stroke="#2f4957" stroke-width="1.8" stroke-linejoin="miter"/><circle cx="14" cy="14" r="5.05" fill="none" stroke="#2f4957" stroke-width="1.8"/></svg>
<div class="t" style="left:668.6px;top:1356.8px;font-size:28px;line-height:28px;color:#4f5b66;font-weight:400;letter-spacing:-0.25px;">Environment Service</div>
<svg style="position:absolute;left:959.5px;top:1362.0px;" width="23.0" height="18.0" viewBox="0 0 23 18"><path d="M1.5 9.5 L8 16 L21.5 2" fill="none" stroke="#4aa83c" stroke-width="2.5"/></svg>
<svg style="position:absolute;left:630.0px;top:1421.1px;" width="28.0" height="28.0" viewBox="0 0 28 28"><path d="M12.10,5.10 L12.10,1.80 L15.90,1.80 L15.90,5.10 L18.95,6.36 L21.28,4.03 L23.97,6.72 L21.64,9.05 L22.90,12.10 L26.20,12.10 L26.20,15.90 L22.90,15.90 L21.64,18.95 L23.97,21.28 L21.28,23.97 L18.95,21.64 L15.90,22.90 L15.90,26.20 L12.10,26.20 L12.10,22.90 L9.05,21.64 L6.72,23.97 L4.03,21.28 L6.36,18.95 L5.10,15.90 L1.80,15.90 L1.80,12.10 L5.10,12.10 L6.36,9.05 L4.03,6.72 L6.72,4.03 L9.05,6.36Z" fill="none" stroke="#2f4957" stroke-width="1.8" stroke-linejoin="miter"/><circle cx="14" cy="14" r="5.05" fill="none" stroke="#2f4957" stroke-width="1.8"/></svg>
<div class="t" style="left:668.6px;top:1421.0px;font-size:28px;line-height:28px;color:#4f5b66;font-weight:400;letter-spacing:-0.25px;">User Management</div>
<svg style="position:absolute;left:959.5px;top:1426.2px;" width="23.0" height="18.0" viewBox="0 0 23 18"><path d="M1.5 9.5 L8 16 L21.5 2" fill="none" stroke="#4aa83c" stroke-width="2.5"/></svg>
<svg style="position:absolute;left:630.0px;top:1485.3px;" width="28.0" height="28.0" viewBox="0 0 28 28"><path d="M12.10,5.10 L12.10,1.80 L15.90,1.80 L15.90,5.10 L18.95,6.36 L21.28,4.03 L23.97,6.72 L21.64,9.05 L22.90,12.10 L26.20,12.10 L26.20,15.90 L22.90,15.90 L21.64,18.95 L23.97,21.28 L21.28,23.97 L18.95,21.64 L15.90,22.90 L15.90,26.20 L12.10,26.20 L12.10,22.90 L9.05,21.64 L6.72,23.97 L4.03,21.28 L6.36,18.95 L5.10,15.90 L1.80,15.90 L1.80,12.10 L5.10,12.10 L6.36,9.05 L4.03,6.72 L6.72,4.03 L9.05,6.36Z" fill="none" stroke="#2f4957" stroke-width="1.8" stroke-linejoin="miter"/><circle cx="14" cy="14" r="5.05" fill="none" stroke="#2f4957" stroke-width="1.8"/></svg>
<div class="t" style="left:668.6px;top:1485.2px;font-size:28px;line-height:28px;color:#4f5b66;font-weight:400;letter-spacing:-0.1px;">ML Control Plane</div>
<svg style="position:absolute;left:959.5px;top:1490.4px;" width="23.0" height="18.0" viewBox="0 0 23 18"><path d="M1.5 9.5 L8 16 L21.5 2" fill="none" stroke="#4aa83c" stroke-width="2.5"/></svg>
<svg style="position:absolute;left:630.0px;top:1549.5px;" width="28.0" height="28.0" viewBox="0 0 28 28"><path d="M12.10,5.10 L12.10,1.80 L15.90,1.80 L15.90,5.10 L18.95,6.36 L21.28,4.03 L23.97,6.72 L21.64,9.05 L22.90,12.10 L26.20,12.10 L26.20,15.90 L22.90,15.90 L21.64,18.95 L23.97,21.28 L21.28,23.97 L18.95,21.64 L15.90,22.90 L15.90,26.20 L12.10,26.20 L12.10,22.90 L9.05,21.64 L6.72,23.97 L4.03,21.28 L6.36,18.95 L5.10,15.90 L1.80,15.90 L1.80,12.10 L5.10,12.10 L6.36,9.05 L4.03,6.72 L6.72,4.03 L9.05,6.36Z" fill="none" stroke="#2f4957" stroke-width="1.8" stroke-linejoin="miter"/><circle cx="14" cy="14" r="5.05" fill="none" stroke="#2f4957" stroke-width="1.8"/></svg>
<div class="t" style="left:668.6px;top:1549.4px;font-size:28px;line-height:28px;color:#4f5b66;font-weight:400;letter-spacing:-0.42000000000000004px;">DW Control Plane</div>
<svg style="position:absolute;left:959.5px;top:1554.6px;" width="23.0" height="18.0" viewBox="0 0 23 18"><path d="M1.5 9.5 L8 16 L21.5 2" fill="none" stroke="#4aa83c" stroke-width="2.5"/></svg>
<svg style="position:absolute;left:630.0px;top:1613.7px;" width="28.0" height="28.0" viewBox="0 0 28 28"><path d="M12.10,5.10 L12.10,1.80 L15.90,1.80 L15.90,5.10 L18.95,6.36 L21.28,4.03 L23.97,6.72 L21.64,9.05 L22.90,12.10 L26.20,12.10 L26.20,15.90 L22.90,15.90 L21.64,18.95 L23.97,21.28 L21.28,23.97 L18.95,21.64 L15.90,22.90 L15.90,26.20 L12.10,26.20 L12.10,22.90 L9.05,21.64 L6.72,23.97 L4.03,21.28 L6.36,18.95 L5.10,15.90 L1.80,15.90 L1.80,12.10 L5.10,12.10 L6.36,9.05 L4.03,6.72 L6.72,4.03 L9.05,6.36Z" fill="none" stroke="#2f4957" stroke-width="1.8" stroke-linejoin="miter"/><circle cx="14" cy="14" r="5.05" fill="none" stroke="#2f4957" stroke-width="1.8"/></svg>
<div class="t" style="left:668.6px;top:1613.6px;font-size:28px;line-height:28px;color:#4f5b66;font-weight:400;letter-spacing:-0.37px;">Data Engineering</div>
<svg style="position:absolute;left:959.5px;top:1618.8px;" width="23.0" height="18.0" viewBox="0 0 23 18"><path d="M1.5 9.5 L8 16 L21.5 2" fill="none" stroke="#4aa83c" stroke-width="2.5"/></svg>
<svg style="position:absolute;left:630.0px;top:1677.9px;" width="28.0" height="28.0" viewBox="0 0 28 28"><path d="M12.10,5.10 L12.10,1.80 L15.90,1.80 L15.90,5.10 L18.95,6.36 L21.28,4.03 L23.97,6.72 L21.64,9.05 L22.90,12.10 L26.20,12.10 L26.20,15.90 L22.90,15.90 L21.64,18.95 L23.97,21.28 L21.28,23.97 L18.95,21.64 L15.90,22.90 L15.90,26.20 L12.10,26.20 L12.10,22.90 L9.05,21.64 L6.72,23.97 L4.03,21.28 L6.36,18.95 L5.10,15.90 L1.80,15.90 L1.80,12.10 L5.10,12.10 L6.36,9.05 L4.03,6.72 L6.72,4.03 L9.05,6.36Z" fill="none" stroke="#2f4957" stroke-width="1.8" stroke-linejoin="miter"/><circle cx="14" cy="14" r="5.05" fill="none" stroke="#2f4957" stroke-width="1.8"/></svg>
<div class="t" style="left:668.6px;top:1677.8px;font-size:28px;line-height:28px;color:#4f5b66;font-weight:400;letter-spacing:0.35px;">Monitoring</div>
<svg style="position:absolute;left:959.5px;top:1683.0px;" width="23.0" height="18.0" viewBox="0 0 23 18"><path d="M1.5 9.5 L8 16 L21.5 2" fill="none" stroke="#4aa83c" stroke-width="2.5"/></svg>
<svg style="position:absolute;left:630.0px;top:1742.1px;" width="28.0" height="28.0" viewBox="0 0 28 28"><path d="M12.10,5.10 L12.10,1.80 L15.90,1.80 L15.90,5.10 L18.95,6.36 L21.28,4.03 L23.97,6.72 L21.64,9.05 L22.90,12.10 L26.20,12.10 L26.20,15.90 L22.90,15.90 L21.64,18.95 L23.97,21.28 L21.28,23.97 L18.95,21.64 L15.90,22.90 L15.90,26.20 L12.10,26.20 L12.10,22.90 L9.05,21.64 L6.72,23.97 L4.03,21.28 L6.36,18.95 L5.10,15.90 L1.80,15.90 L1.80,12.10 L5.10,12.10 L6.36,9.05 L4.03,6.72 L6.72,4.03 L9.05,6.36Z" fill="none" stroke="#2f4957" stroke-width="1.8" stroke-linejoin="miter"/><circle cx="14" cy="14" r="5.05" fill="none" stroke="#2f4957" stroke-width="1.8"/></svg>
<div class="t" style="left:668.6px;top:1742.0px;font-size:28px;line-height:28px;color:#4f5b66;font-weight:400;letter-spacing:-0.25px;">Compute Engine</div>
<svg style="position:absolute;left:959.5px;top:1747.2px;" width="23.0" height="18.0" viewBox="0 0 23 18"><path d="M1.5 9.5 L8 16 L21.5 2" fill="none" stroke="#4aa83c" stroke-width="2.5"/></svg>
<svg style="position:absolute;left:630.0px;top:1806.3px;" width="28.0" height="28.0" viewBox="0 0 28 28"><path d="M12.10,5.10 L12.10,1.80 L15.90,1.80 L15.90,5.10 L18.95,6.36 L21.28,4.03 L23.97,6.72 L21.64,9.05 L22.90,12.10 L26.20,12.10 L26.20,15.90 L22.90,15.90 L21.64,18.95 L23.97,21.28 L21.28,23.97 L18.95,21.64 L15.90,22.90 L15.90,26.20 L12.10,26.20 L12.10,22.90 L9.05,21.64 L6.72,23.97 L4.03,21.28 L6.36,18.95 L5.10,15.90 L1.80,15.90 L1.80,12.10 L5.10,12.10 L6.36,9.05 L4.03,6.72 L6.72,4.03 L9.05,6.36Z" fill="none" stroke="#2f4957" stroke-width="1.8" stroke-linejoin="miter"/><circle cx="14" cy="14" r="5.05" fill="none" stroke="#2f4957" stroke-width="1.8"/></svg>
<div class="t" style="left:668.6px;top:1806.2px;font-size:28px;line-height:28px;color:#4f5b66;font-weight:400;letter-spacing:0.13px;">Platform Security</div>
<svg style="position:absolute;left:959.5px;top:1811.4px;" width="23.0" height="18.0" viewBox="0 0 23 18"><path d="M1.5 9.5 L8 16 L21.5 2" fill="none" stroke="#4aa83c" stroke-width="2.5"/></svg>
<svg style="position:absolute;left:630.0px;top:1870.5px;" width="28.0" height="28.0" viewBox="0 0 28 28"><path d="M12.10,5.10 L12.10,1.80 L15.90,1.80 L15.90,5.10 L18.95,6.36 L21.28,4.03 L23.97,6.72 L21.64,9.05 L22.90,12.10 L26.20,12.10 L26.20,15.90 L22.90,15.90 L21.64,18.95 L23.97,21.28 L21.28,23.97 L18.95,21.64 L15.90,22.90 L15.90,26.20 L12.10,26.20 L12.10,22.90 L9.05,21.64 L6.72,23.97 L4.03,21.28 L6.36,18.95 L5.10,15.90 L1.80,15.90 L1.80,12.10 L5.10,12.10 L6.36,9.05 L4.03,6.72 L6.72,4.03 L9.05,6.36Z" fill="none" stroke="#2f4957" stroke-width="1.8" stroke-linejoin="miter"/><circle cx="14" cy="14" r="5.05" fill="none" stroke="#2f4957" stroke-width="1.8"/></svg>
<div class="t" style="left:668.6px;top:1870.4px;font-size:28px;line-height:28px;color:#4f5b66;font-weight:400;letter-spacing:-0.25px;">UI Components</div>
<svg style="position:absolute;left:959.5px;top:1875.6px;" width="23.0" height="18.0" viewBox="0 0 23 18"><path d="M1.5 9.5 L8 16 L21.5 2" fill="none" stroke="#4aa83c" stroke-width="2.5"/></svg>
<svg style="position:absolute;left:630.0px;top:1934.7px;" width="28.0" height="28.0" viewBox="0 0 28 28"><path d="M12.10,5.10 L12.10,1.80 L15.90,1.80 L15.90,5.10 L18.95,6.36 L21.28,4.03 L23.97,6.72 L21.64,9.05 L22.90,12.10 L26.20,12.10 L26.20,15.90 L22.90,15.90 L21.64,18.95 L23.97,21.28 L21.28,23.97 L18.95,21.64 L15.90,22.90 L15.90,26.20 L12.10,26.20 L12.10,22.90 L9.05,21.64 L6.72,23.97 L4.03,21.28 L6.36,18.95 L5.10,15.90 L1.80,15.90 L1.80,12.10 L5.10,12.10 L6.36,9.05 L4.03,6.72 L6.72,4.03 L9.05,6.36Z" fill="none" stroke="#2f4957" stroke-width="1.8" stroke-linejoin="miter"/><circle cx="14" cy="14" r="5.05" fill="none" stroke="#2f4957" stroke-width="1.8"/></svg>
<div class="t" style="left:668.6px;top:1934.6px;font-size:28px;line-height:28px;color:#4f5b66;font-weight:400;letter-spacing:0.21999999999999997px;">Miscellaneous</div>
<svg style="position:absolute;left:956.5px;top:1932.8px;" width="26.0" height="26.5" viewBox="0 0 26 26"><path d="M13 1 L25.5 25 L0.5 25 Z" fill="#f0a24a" stroke="#f0a24a" stroke-width="1" stroke-linejoin="round"/><rect x="11.8" y="9.2" width="2.4" height="6.6" rx="0.6" fill="#111a22"/><circle cx="13" cy="19.6" r="1.55" fill="#111a22"/></svg>
<div style="position:absolute;left:1049.0px;top:1000.0px;width:1431.0px;height:62.0px;background:#d9dbdf;"></div>
<div class="t" style="left:1064.5px;top:1018.0px;font-size:27px;line-height:27px;color:#4c5862;font-weight:400;letter-spacing:-0.3px;-webkit-text-stroke:0.7px currentColor;">Rule</div>
<div class="t" style="left:1294.5px;top:1018.0px;font-size:27px;line-height:27px;color:#4c5862;font-weight:400;letter-spacing:0.5px;-webkit-text-stroke:0.7px currentColor;">Note</div>
<div class="t" style="left:1524.5px;top:1018.0px;font-size:27px;line-height:27px;color:#4c5862;font-weight:400;letter-spacing:0.75px;-webkit-text-stroke:0.7px currentColor;">Time Reported</div>
<div class="t" style="left:1755.0px;top:1018.0px;font-size:27px;line-height:27px;color:#4c5862;font-weight:400;letter-spacing:0.4px;-webkit-text-stroke:0.7px currentColor;">Environment</div>
<div class="t" style="left:1984.6px;top:1018.0px;font-size:27px;line-height:27px;color:#4c5862;font-weight:400;letter-spacing:0.4px;-webkit-text-stroke:0.7px currentColor;">Service</div>
<div style="position:absolute;left:1049.0px;top:1062.0px;width:1431.0px;height:2.0px;background:#e8e9eb;"></div>
<div style="position:absolute;left:1049.0px;top:1064.0px;width:1431.0px;height:100.0px;background:#f8f9fb;"></div>
<div style="position:absolute;left:1049.0px;top:1164.0px;width:1431.0px;height:2.0px;background:#e6e7ea;"></div>
<svg style="position:absolute;left:1069.0px;top:1078.0px;" width="26.0" height="26.5" viewBox="0 0 26 26"><path d="M13 1 L25.5 25 L0.5 25 Z" fill="#f0a24a" stroke="#f0a24a" stroke-width="1" stroke-linejoin="round"/><rect x="11.8" y="9.2" width="2.4" height="6.6" rx="0.6" fill="#111a22"/><circle cx="13" cy="19.6" r="1.55" fill="#111a22"/></svg>
<div class="t" style="left:1118.2px;top:1084.1px;font-size:26px;line-height:26px;color:#505c66;font-weight:700;letter-spacing:-0.3px;">Alert-http-r</div>
<div class="t" style="left:1065.4px;top:1120.0px;font-size:26px;line-height:26px;color:#505c66;font-weight:700;letter-spacing:-0.8px;">equests1</div>
<div class="t" style="left:1295.5px;top:1082.3px;font-size:26px;line-height:26px;color:#505c66;font-weight:400;letter-spacing:0.1px;">Job failed to co</div>
<div class="t" style="left:1295.5px;top:1118.2px;font-size:26px;line-height:26px;color:#505c66;font-weight:400;letter-spacing:0px;">mplete</div>
<div class="t" style="left:1525.5px;top:1099.9px;font-size:26px;line-height:26px;color:#505c66;font-weight:400;letter-spacing:0.1px;">5 minutes ago</div>
<div class="t" style="left:1756.0px;top:1082.4px;font-size:26px;line-height:26px;color:#505c66;font-weight:400;letter-spacing:0.1px;">Management</div>
<div class="t" style="left:1756.0px;top:1117.8px;font-size:26px;line-height:26px;color:#505c66;font-weight:400;letter-spacing:0px;">Console</div>
<div class="t" style="left:1985.6px;top:1099.9px;font-size:26px;line-height:26px;color:#505c66;font-weight:400;letter-spacing:0.1px;">Miscellaneous</div>
<div style="position:absolute;left:2216px;top:1090px;width:140.5px;height:43.5px;border:2px solid #1f4f9c;border-radius:5px;background:#fff"></div>
<svg style="position:absolute;left:2234.5px;top:1102.0px;" width="22.0" height="22.0" viewBox="0 0 22 22"><circle cx="11" cy="11" r="8.8" fill="none" stroke="#1d55a6" stroke-width="2.1"/><line x1="4.8" y1="4.8" x2="17.2" y2="17.2" stroke="#1d55a6" stroke-width="2.1"/></svg>
<div class="t" style="left:2266.4px;top:1101.6px;font-size:24px;line-height:24px;color:#1d55a6;font-weight:400;letter-spacing:-0.4px;">Silence</div>
<svg style="position:absolute;left:2401.0px;top:1103.0px;" width="29.0" height="19.0" viewBox="0 0 29 19"><path d="M2 3 L14.5 16 L27 3" fill="none" stroke="#8a9198" stroke-width="2.8"/></svg>
<div style="position:absolute;left:1049.0px;top:1266.0px;width:1431.0px;height:2.0px;background:#e6e7ea;"></div>
<svg style="position:absolute;left:1069.0px;top:1180.0px;" width="26.0" height="26.5" viewBox="0 0 26 26"><path d="M13 1 L25.5 25 L0.5 25 Z" fill="#f0a24a" stroke="#f0a24a" stroke-width="1" stroke-linejoin="round"/><rect x="11.8" y="9.2" width="2.4" height="6.6" rx="0.6" fill="#111a22"/><circle cx="13" cy="19.6" r="1.55" fill="#111a22"/></svg>
<div class="t" style="left:1118.2px;top:1186.1px;font-size:26px;line-height:26px;color:#505c66;font-weight:700;letter-spacing:-0.3px;">Alert-http-r</div>
<div class="t" style="left:1065.4px;top:1222.0px;font-size:26px;line-height:26px;color:#505c66;font-weight:700;letter-spacing:-0.8px;">equests1</div>
<div class="t" style="left:1295.5px;top:1184.3px;font-size:26px;line-height:26px;color:#505c66;font-weight:400;letter-spacing:0.1px;">Job failed to co</div>
<div class="t" style="left:1295.5px;top:1220.2px;font-size:26px;line-height:26px;color:#505c66;font-weight:400;letter-spacing:0px;">mplete</div>
<div class="t" style="left:1525.5px;top:1201.9px;font-size:26px;line-height:26px;color:#505c66;font-weight:400;letter-spacing:0.1px;">5 minutes ago</div>
<div class="t" style="left:1756.0px;top:1184.4px;font-size:26px;line-height:26px;color:#505c66;font-weight:400;letter-spacing:0.1px;">Management</div>
<div class="t" style="left:1756.0px;top:1219.8px;font-size:26px;line-height:26px;color:#505c66;font-weight:400;letter-spacing:0px;">Console</div>
<div class="t" style="left:1985.6px;top:1201.9px;font-size:26px;line-height:26px;color:#505c66;font-weight:400;letter-spacing:0.1px;">Miscellaneous</div>
<div style="position:absolute;left:2216px;top:1192px;width:140.5px;height:43.5px;border:2px solid #d3d6da;border-radius:5px;background:#fff"></div>
<svg style="position:absolute;left:2234.5px;top:1204.0px;" width="22.0" height="22.0" viewBox="0 0 22 22"><circle cx="11" cy="11" r="8.8" fill="none" stroke="#2b6fd1" stroke-width="2.1"/><line x1="4.8" y1="4.8" x2="17.2" y2="17.2" stroke="#2b6fd1" stroke-width="2.1"/></svg>
<div class="t" style="left:2266.4px;top:1203.6px;font-size:24px;line-height:24px;color:#2b6fd1;font-weight:400;letter-spacing:-0.4px;">Silence</div>
<svg style="position:absolute;left:2401.0px;top:1205.0px;" width="29.0" height="19.0" viewBox="0 0 29 19"><path d="M2 3 L14.5 16 L27 3" fill="none" stroke="#8a9198" stroke-width="2.8"/></svg>
<div style="position:absolute;left:1049.0px;top:1368.0px;width:1431.0px;height:2.0px;background:#e6e7ea;"></div>
<svg style="position:absolute;left:1069.0px;top:1282.0px;" width="26.0" height="26.5" viewBox="0 0 26 26"><path d="M13 1 L25.5 25 L0.5 25 Z" fill="#f0a24a" stroke="#f0a24a" stroke-width="1" stroke-linejoin="round"/><rect x="11.8" y="9.2" width="2.4" height="6.6" rx="0.6" fill="#111a22"/><circle cx="13" cy="19.6" r="1.55" fill="#111a22"/></svg>
<div class="t" style="left:1118.2px;top:1288.1px;font-size:26px;line-height:26px;color:#505c66;font-weight:700;letter-spacing:-0.3px;">Alert-http-r</div>
<div class="t" style="left:1065.4px;top:1324.0px;font-size:26px;line-height:26px;color:#505c66;font-weight:700;letter-spacing:-0.8px;">equests1</div>
<div class="t" style="left:1295.5px;top:1286.3px;font-size:26px;line-height:26px;color:#505c66;font-weight:400;letter-spacing:0.1px;">Job failed to co</div>
<div class="t" style="left:1295.5px;top:1322.2px;font-size:26px;line-height:26px;color:#505c66;font-weight:400;letter-spacing:0px;">mplete</div>
<div class="t" style="left:1525.5px;top:1303.9px;font-size:26px;line-height:26px;color:#505c66;font-weight:400;letter-spacing:0.1px;">5 minutes ago</div>
<div class="t" style="left:1756.0px;top:1286.4px;font-size:26px;line-height:26px;color:#505c66;font-weight:400;letter-spacing:0.1px;">Management</div>
<div class="t" style="left:1756.0px;top:1321.8px;font-size:26px;line-height:26px;color:#505c66;font-weight:400;letter-spacing:0px;">Console</div>
<div class="t" style="left:1985.6px;top:1303.9px;font-size:26px;line-height:26px;color:#505c66;font-weight:400;letter-spacing:0.1px;">Miscellaneous</div>
<div style="position:absolute;left:2216px;top:1294px;width:140.5px;height:43.5px;border:2px solid #d3d6da;border-radius:5px;background:#fff"></div>
<svg style="position:absolute;left:2234.5px;top:1306.0px;" width="22.0" height="22.0" viewBox="0 0 22 22"><circle cx="11" cy="11" r="8.8" fill="none" stroke="#2b6fd1" stroke-width="2.1"/><line x1="4.8" y1="4.8" x2="17.2" y2="17.2" stroke="#2b6fd1" stroke-width="2.1"/></svg>
<div class="t" style="left:2266.4px;top:1305.6px;font-size:24px;line-height:24px;color:#2b6fd1;font-weight:400;letter-spacing:-0.4px;">Silence</div>
<svg style="position:absolute;left:2401.0px;top:1307.0px;" width="29.0" height="19.0" viewBox="0 0 29 19"><path d="M2 3 L14.5 16 L27 3" fill="none" stroke="#8a9198" stroke-width="2.8"/></svg>
<div style="position:absolute;left:1049.0px;top:1470.0px;width:1431.0px;height:2.0px;background:#e6e7ea;"></div>
<svg style="position:absolute;left:1069.0px;top:1384.0px;" width="26.0" height="26.5" viewBox="0 0 26 26"><path d="M13 1 L25.5 25 L0.5 25 Z" fill="#f0a24a" stroke="#f0a24a" stroke-width="1" stroke-linejoin="round"/><rect x="11.8" y="9.2" width="2.4" height="6.6" rx="0.6" fill="#111a22"/><circle cx="13" cy="19.6" r="1.55" fill="#111a22"/></svg>
<div class="t" style="left:1118.2px;top:1390.1px;font-size:26px;line-height:26px;color:#505c66;font-weight:700;letter-spacing:-0.3px;">Alert-http-r</div>
<div class="t" style="left:1065.4px;top:1426.0px;font-size:26px;line-height:26px;color:#505c66;font-weight:700;letter-spacing:-0.8px;">equests1</div>
<div class="t" style="left:1295.5px;top:1388.3px;font-size:26px;line-height:26px;color:#505c66;font-weight:400;letter-spacing:0.1px;">Job failed to co</div>
<div class="t" style="left:1295.5px;top:1424.2px;font-size:26px;line-height:26px;color:#505c66;font-weight:400;letter-spacing:0px;">mplete</div>
<div class="t" style="left:1525.5px;top:1405.9px;font-size:26px;line-height:26px;color:#505c66;font-weight:400;letter-spacing:0.1px;">5 minutes ago</div>
<div class="t" style="left:1756.0px;top:1388.4px;font-size:26px;line-height:26px;color:#505c66;font-weight:400;letter-spacing:0.1px;">Management</div>
<div class="t" style="left:1756.0px;top:1423.8px;font-size:26px;line-height:26px;color:#505c66;font-weight:400;letter-spacing:0px;">Console</div>
<div class="t" style="left:1985.6px;top:1405.9px;font-size:26px;line-height:26px;color:#505c66;font-weight:400;letter-spacing:0.1px;">Miscellaneous</div>
<div style="position:absolute;left:2216px;top:1396px;width:140.5px;height:43.5px;border:2px solid #d3d6da;border-radius:5px;background:#fff"></div>
<svg style="position:absolute;left:2234.5px;top:1408.0px;" width="22.0" height="22.0" viewBox="0 0 22 22"><circle cx="11" cy="11" r="8.8" fill="none" stroke="#2b6fd1" stroke-width="2.1"/><line x1="4.8" y1="4.8" x2="17.2" y2="17.2" stroke="#2b6fd1" stroke-width="2.1"/></svg>
<div class="t" style="left:2266.4px;top:1407.6px;font-size:24px;line-height:24px;color:#2b6fd1;font-weight:400;letter-spacing:-0.4px;">Silence</div>
<svg style="position:absolute;left:2401.0px;top:1409.0px;" width="29.0" height="19.0" viewBox="0 0 29 19"><path d="M2 3 L14.5 16 L27 3" fill="none" stroke="#8a9198" stroke-width="2.8"/></svg>
<div style="position:absolute;left:1049.0px;top:1572.0px;width:1431.0px;height:2.0px;background:#e6e7ea;"></div>
<svg style="position:absolute;left:1069.0px;top:1486.0px;" width="26.0" height="26.5" viewBox="0 0 26 26"><path d="M13 1 L25.5 25 L0.5 25 Z" fill="#f0a24a" stroke="#f0a24a" stroke-width="1" stroke-linejoin="round"/><rect x="11.8" y="9.2" width="2.4" height="6.6" rx="0.6" fill="#111a22"/><circle cx="13" cy="19.6" r="1.55" fill="#111a22"/></svg>
<div class="t" style="left:1118.2px;top:1492.1px;font-size:26px;line-height:26px;color:#505c66;font-weight:700;letter-spacing:-0.3px;">Alert-http-r</div>
<div class="t" style="left:1065.4px;top:1528.0px;font-size:26px;line-height:26px;color:#505c66;font-weight:700;letter-spacing:-0.8px;">equests1</div>
<div class="t" style="left:1295.5px;top:1490.3px;font-size:26px;line-height:26px;color:#505c66;font-weight:400;letter-spacing:0.1px;">Job failed to co</div>
<div class="t" style="left:1295.5px;top:1526.2px;font-size:26px;line-height:26px;color:#505c66;font-weight:400;letter-spacing:0px;">mplete</div>
<div class="t" style="left:1525.5px;top:1507.9px;font-size:26px;line-height:26px;color:#505c66;font-weight:400;letter-spacing:0.1px;">5 minutes ago</div>
<div class="t" style="left:1756.0px;top:1490.4px;font-size:26px;line-height:26px;color:#505c66;font-weight:400;letter-spacing:0.1px;">Management</div>
<div class="t" style="left:1756.0px;top:1525.8px;font-size:26px;line-height:26px;color:#505c66;font-weight:400;letter-spacing:0px;">Console</div>
<div class="t" style="left:1985.6px;top:1507.9px;font-size:26px;line-height:26px;color:#505c66;font-weight:400;letter-spacing:0.1px;">Miscellaneous</div>
<div style="position:absolute;left:2216px;top:1498px;width:140.5px;height:43.5px;border:2px solid #d3d6da;border-radius:5px;background:#fff"></div>
<svg style="position:absolute;left:2234.5px;top:1510.0px;" width="22.0" height="22.0" viewBox="0 0 22 22"><circle cx="11" cy="11" r="8.8" fill="none" stroke="#2b6fd1" stroke-width="2.1"/><line x1="4.8" y1="4.8" x2="17.2" y2="17.2" stroke="#2b6fd1" stroke-width="2.1"/></svg>
<div class="t" style="left:2266.4px;top:1509.6px;font-size:24px;line-height:24px;color:#2b6fd1;font-weight:400;letter-spacing:-0.4px;">Silence</div>
<svg style="position:absolute;left:2401.0px;top:1511.0px;" width="29.0" height="19.0" viewBox="0 0 29 19"><path d="M2 3 L14.5 16 L27 3" fill="none" stroke="#8a9198" stroke-width="2.8"/></svg>
<div style="position:absolute;left:1049.0px;top:1674.0px;width:1431.0px;height:2.0px;background:#e6e7ea;"></div>
<svg style="position:absolute;left:1069.0px;top:1588.0px;" width="26.0" height="26.5" viewBox="0 0 26 26"><path d="M13 1 L25.5 25 L0.5 25 Z" fill="#f0a24a" stroke="#f0a24a" stroke-width="1" stroke-linejoin="round"/><rect x="11.8" y="9.2" width="2.4" height="6.6" rx="0.6" fill="#111a22"/><circle cx="13" cy="19.6" r="1.55" fill="#111a22"/></svg>
<div class="t" style="left:1118.2px;top:1594.1px;font-size:26px;line-height:26px;color:#505c66;font-weight:700;letter-spacing:-0.3px;">Alert-http-r</div>
<div class="t" style="left:1065.4px;top:1630.0px;font-size:26px;line-height:26px;color:#505c66;font-weight:700;letter-spacing:-0.8px;">equests1</div>
<div class="t" style="left:1295.5px;top:1592.3px;font-size:26px;line-height:26px;color:#505c66;font-weight:400;letter-spacing:0.1px;">Job failed to co</div>
<div class="t" style="left:1295.5px;top:1628.2px;font-size:26px;line-height:26px;color:#505c66;font-weight:400;letter-spacing:0px;">mplete</div>
<div class="t" style="left:1525.5px;top:1609.9px;font-size:26px;line-height:26px;color:#505c66;font-weight:400;letter-spacing:0.1px;">5 minutes ago</div>
<div class="t" style="left:1756.0px;top:1592.4px;font-size:26px;line-height:26px;color:#505c66;font-weight:400;letter-spacing:0.1px;">Management</div>
<div class="t" style="left:1756.0px;top:1627.8px;font-size:26px;line-height:26px;color:#505c66;font-weight:400;letter-spacing:0px;">Console</div>
<div class="t" style="left:1985.6px;top:1609.9px;font-size:26px;line-height:26px;color:#505c66;font-weight:400;letter-spacing:0.1px;">Miscellaneous</div>
<div style="position:absolute;left:2216px;top:1600px;width:140.5px;height:43.5px;border:2px solid #d3d6da;border-radius:5px;background:#fff"></div>
<svg style="position:absolute;left:2234.5px;top:1612.0px;" width="22.0" height="22.0" viewBox="0 0 22 22"><circle cx="11" cy="11" r="8.8" fill="none" stroke="#2b6fd1" stroke-width="2.1"/><line x1="4.8" y1="4.8" x2="17.2" y2="17.2" stroke="#2b6fd1" stroke-width="2.1"/></svg>
<div class="t" style="left:2266.4px;top:1611.6px;font-size:24px;line-height:24px;color:#2b6fd1;font-weight:400;letter-spacing:-0.4px;">Silence</div>
<svg style="position:absolute;left:2401.0px;top:1613.0px;" width="29.0" height="19.0" viewBox="0 0 29 19"><path d="M2 3 L14.5 16 L27 3" fill="none" stroke="#8a9198" stroke-width="2.8"/></svg>
<div style="position:absolute;left:1049.0px;top:1776.0px;width:1431.0px;height:2.0px;background:#e6e7ea;"></div>
<svg style="position:absolute;left:1069.0px;top:1690.0px;" width="26.0" height="26.5" viewBox="0 0 26 26"><path d="M13 1 L25.5 25 L0.5 25 Z" fill="#f0a24a" stroke="#f0a24a" stroke-width="1" stroke-linejoin="round"/><rect x="11.8" y="9.2" width="2.4" height="6.6" rx="0.6" fill="#111a22"/><circle cx="13" cy="19.6" r="1.55" fill="#111a22"/></svg>
<div class="t" style="left:1118.2px;top:1696.1px;font-size:26px;line-height:26px;color:#505c66;font-weight:700;letter-spacing:-0.3px;">Alert-http-r</div>
<div class="t" style="left:1065.4px;top:1732.0px;font-size:26px;line-height:26px;color:#505c66;font-weight:700;letter-spacing:-0.8px;">equests1</div>
<div class="t" style="left:1295.5px;top:1694.3px;font-size:26px;line-height:26px;color:#505c66;font-weight:400;letter-spacing:0.1px;">Job failed to co</div>
<div class="t" style="left:1295.5px;top:1730.2px;font-size:26px;line-height:26px;color:#505c66;font-weight:400;letter-spacing:0px;">mplete</div>
<div class="t" style="left:1525.5px;top:1711.9px;font-size:26px;line-height:26px;color:#505c66;font-weight:400;letter-spacing:0.1px;">5 minutes ago</div>
<div class="t" style="left:1756.0px;top:1694.4px;font-size:26px;line-height:26px;color:#505c66;font-weight:400;letter-spacing:0.1px;">Management</div>
<div class="t" style="left:1756.0px;top:1729.8px;font-size:26px;line-height:26px;color:#505c66;font-weight:400;letter-spacing:0px;">Console</div>
<div class="t" style="left:1985.6px;top:1711.9px;font-size:26px;line-height:26px;color:#505c66;font-weight:400;letter-spacing:0.1px;">Miscellaneous</div>
<div style="position:absolute;left:2216px;top:1702px;width:140.5px;height:43.5px;border:2px solid #d3d6da;border-radius:5px;background:#fff"></div>
<svg style="position:absolute;left:2234.5px;top:1714.0px;" width="22.0" height="22.0" viewBox="0 0 22 22"><circle cx="11" cy="11" r="8.8" fill="none" stroke="#2b6fd1" stroke-width="2.1"/><line x1="4.8" y1="4.8" x2="17.2" y2="17.2" stroke="#2b6fd1" stroke-width="2.1"/></svg>
<div class="t" style="left:2266.4px;top:1713.6px;font-size:24px;line-height:24px;color:#2b6fd1;font-weight:400;letter-spacing:-0.4px;">Silence</div>
<svg style="position:absolute;left:2401.0px;top:1715.0px;" width="29.0" height="19.0" viewBox="0 0 29 19"><path d="M2 3 L14.5 16 L27 3" fill="none" stroke="#8a9198" stroke-width="2.8"/></svg>
<div style="position:absolute;left:1049.0px;top:1878.0px;width:1431.0px;height:2.0px;background:#e6e7ea;"></div>
<svg style="position:absolute;left:1069.0px;top:1792.0px;" width="26.0" height="26.5" viewBox="0 0 26 26"><path d="M13 1 L25.5 25 L0.5 25 Z" fill="#f0a24a" stroke="#f0a24a" stroke-width="1" stroke-linejoin="round"/><rect x="11.8" y="9.2" width="2.4" height="6.6" rx="0.6" fill="#111a22"/><circle cx="13" cy="19.6" r="1.55" fill="#111a22"/></svg>
<div class="t" style="left:1118.2px;top:1798.1px;font-size:26px;line-height:26px;color:#505c66;font-weight:700;letter-spacing:-0.3px;">Alert-http-r</div>
<div class="t" style="left:1065.4px;top:1834.0px;font-size:26px;line-height:26px;color:#505c66;font-weight:700;letter-spacing:-0.8px;">equests1</div>
<div class="t" style="left:1295.5px;top:1796.3px;font-size:26px;line-height:26px;color:#505c66;font-weight:400;letter-spacing:0.1px;">Job failed to co</div>
<div class="t" style="left:1295.5px;top:1832.2px;font-size:26px;line-height:26px;color:#505c66;font-weight:400;letter-spacing:0px;">mplete</div>
<div class="t" style="left:1525.5px;top:1813.9px;font-size:26px;line-height:26px;color:#505c66;font-weight:400;letter-spacing:0.1px;">5 minutes ago</div>
<div class="t" style="left:1756.0px;top:1796.4px;font-size:26px;line-height:26px;color:#505c66;font-weight:400;letter-spacing:0.1px;">Management</div>
<div class="t" style="left:1756.0px;top:1831.8px;font-size:26px;line-height:26px;color:#505c66;font-weight:400;letter-spacing:0px;">Console</div>
<div class="t" style="left:1985.6px;top:1813.9px;font-size:26px;line-height:26px;color:#505c66;font-weight:400;letter-spacing:0.1px;">Miscellaneous</div>
<div style="position:absolute;left:2216px;top:1804px;width:140.5px;height:43.5px;border:2px solid #d3d6da;border-radius:5px;background:#fff"></div>
<svg style="position:absolute;left:2234.5px;top:1816.0px;" width="22.0" height="22.0" viewBox="0 0 22 22"><circle cx="11" cy="11" r="8.8" fill="none" stroke="#2b6fd1" stroke-width="2.1"/><line x1="4.8" y1="4.8" x2="17.2" y2="17.2" stroke="#2b6fd1" stroke-width="2.1"/></svg>
<div class="t" style="left:2266.4px;top:1815.6px;font-size:24px;line-height:24px;color:#2b6fd1;font-weight:400;letter-spacing:-0.4px;">Silence</div>
<svg style="position:absolute;left:2401.0px;top:1817.0px;" width="29.0" height="19.0" viewBox="0 0 29 19"><path d="M2 3 L14.5 16 L27 3" fill="none" stroke="#8a9198" stroke-width="2.8"/></svg>
<div style="position:absolute;left:1049.0px;top:1980.0px;width:1431.0px;height:2.0px;background:#e6e7ea;"></div>
<svg style="position:absolute;left:1069.0px;top:1894.0px;" width="26.0" height="26.5" viewBox="0 0 26 26"><path d="M13 1 L25.5 25 L0.5 25 Z" fill="#f0a24a" stroke="#f0a24a" stroke-width="1" stroke-linejoin="round"/><rect x="11.8" y="9.2" width="2.4" height="6.6" rx="0.6" fill="#111a22"/><circle cx="13" cy="19.6" r="1.55" fill="#111a22"/></svg>
<div class="t" style="left:1118.2px;top:1900.1px;font-size:26px;line-height:26px;color:#505c66;font-weight:700;letter-spacing:-0.3px;">Alert-http-r</div>
<div class="t" style="left:1065.4px;top:1936.0px;font-size:26px;line-height:26px;color:#505c66;font-weight:700;letter-spacing:-0.8px;">equests1</div>
<div class="t" style="left:1295.5px;top:1898.3px;font-size:26px;line-height:26px;color:#505c66;font-weight:400;letter-spacing:0.1px;">Job failed to co</div>
<div class="t" style="left:1295.5px;top:1934.2px;font-size:26px;line-height:26px;color:#505c66;font-weight:400;letter-spacing:0px;">mplete</div>
<div class="t" style="left:1525.5px;top:1915.9px;font-size:26px;line-height:26px;color:#505c66;font-weight:400;letter-spacing:0.1px;">5 minutes ago</div>
<div class="t" style="left:1756.0px;top:1898.4px;font-size:26px;line-height:26px;color:#505c66;font-weight:400;letter-spacing:0.1px;">Management</div>
<div class="t" style="left:1756.0px;top:1933.8px;font-size:26px;line-height:26px;color:#505c66;font-weight:400;letter-spacing:0px;">Console</div>
<div class="t" style="left:1985.6px;top:1915.9px;font-size:26px;line-height:26px;color:#505c66;font-weight:400;letter-spacing:0.1px;">Miscellaneous</div>
<div style="position:absolute;left:2216px;top:1906px;width:140.5px;height:43.5px;border:2px solid #d3d6da;border-radius:5px;background:#fff"></div>
<svg style="position:absolute;left:2234.5px;top:1918.0px;" width="22.0" height="22.0" viewBox="0 0 22 22"><circle cx="11" cy="11" r="8.8" fill="none" stroke="#2b6fd1" stroke-width="2.1"/><line x1="4.8" y1="4.8" x2="17.2" y2="17.2" stroke="#2b6fd1" stroke-width="2.1"/></svg>
<div class="t" style="left:2266.4px;top:1917.6px;font-size:24px;line-height:24px;color:#2b6fd1;font-weight:400;letter-spacing:-0.4px;">Silence</div>
<svg style="position:absolute;left:2401.0px;top:1919.0px;" width="29.0" height="19.0" viewBox="0 0 29 19"><path d="M2 3 L14.5 16 L27 3" fill="none" stroke="#8a9198" stroke-width="2.8"/></svg>
<div style="position:absolute;left:1049.0px;top:2082.0px;width:1431.0px;height:2.0px;background:#e6e7ea;"></div>
<svg style="position:absolute;left:1069.0px;top:1996.0px;" width="26.0" height="26.5" viewBox="0 0 26 26"><path d="M13 1 L25.5 25 L0.5 25 Z" fill="#f0a24a" stroke="#f0a24a" stroke-width="1" stroke-linejoin="round"/><rect x="11.8" y="9.2" width="2.4" height="6.6" rx="0.6" fill="#111a22"/><circle cx="13" cy="19.6" r="1.55" fill="#111a22"/></svg>
<div class="t" style="left:1118.2px;top:2002.1px;font-size:26px;line-height:26px;color:#505c66;font-weight:700;letter-spacing:-0.3px;">Alert-http-r</div>
<div class="t" style="left:1065.4px;top:2038.0px;font-size:26px;line-height:26px;color:#505c66;font-weight:700;letter-spacing:-0.8px;">equests1</div>
<div class="t" style="left:1295.5px;top:2000.3px;font-size:26px;line-height:26px;color:#505c66;font-weight:400;letter-spacing:0.1px;">Job failed to co</div>
<div class="t" style="left:1295.5px;top:2036.2px;font-size:26px;line-height:26px;color:#505c66;font-weight:400;letter-spacing:0px;">mplete</div>
<div class="t" style="left:1525.5px;top:2017.9px;font-size:26px;line-height:26px;color:#505c66;font-weight:400;letter-spacing:0.1px;">5 minutes ago</div>
<div class="t" style="left:1756.0px;top:2000.4px;font-size:26px;line-height:26px;color:#505c66;font-weight:400;letter-spacing:0.1px;">Management</div>
<div class="t" style="left:1756.0px;top:2035.8px;font-size:26px;line-height:26px;color:#505c66;font-weight:400;letter-spacing:0px;">Console</div>
<div class="t" style="left:1985.6px;top:2017.9px;font-size:26px;line-height:26px;color:#505c66;font-weight:400;letter-spacing:0.1px;">Miscellaneous</div>
<div style="position:absolute;left:2216px;top:2008px;width:140.5px;height:43.5px;border:2px solid #d3d6da;border-radius:5px;background:#fff"></div>
<svg style="position:absolute;left:2234.5px;top:2020.0px;" width="22.0" height="22.0" viewBox="0 0 22 22"><circle cx="11" cy="11" r="8.8" fill="none" stroke="#2b6fd1" stroke-width="2.1"/><line x1="4.8" y1="4.8" x2="17.2" y2="17.2" stroke="#2b6fd1" stroke-width="2.1"/></svg>
<div class="t" style="left:2266.4px;top:2019.6px;font-size:24px;line-height:24px;color:#2b6fd1;font-weight:400;letter-spacing:-0.4px;">Silence</div>
<svg style="position:absolute;left:2401.0px;top:2021.0px;" width="29.0" height="19.0" viewBox="0 0 29 19"><path d="M2 3 L14.5 16 L27 3" fill="none" stroke="#8a9198" stroke-width="2.8"/></svg>
<div style="position:absolute;left:2193px;top:1070.2px;width:186px;height:75.8px;border:5px solid #f39a2a"></div>

</body></html>
